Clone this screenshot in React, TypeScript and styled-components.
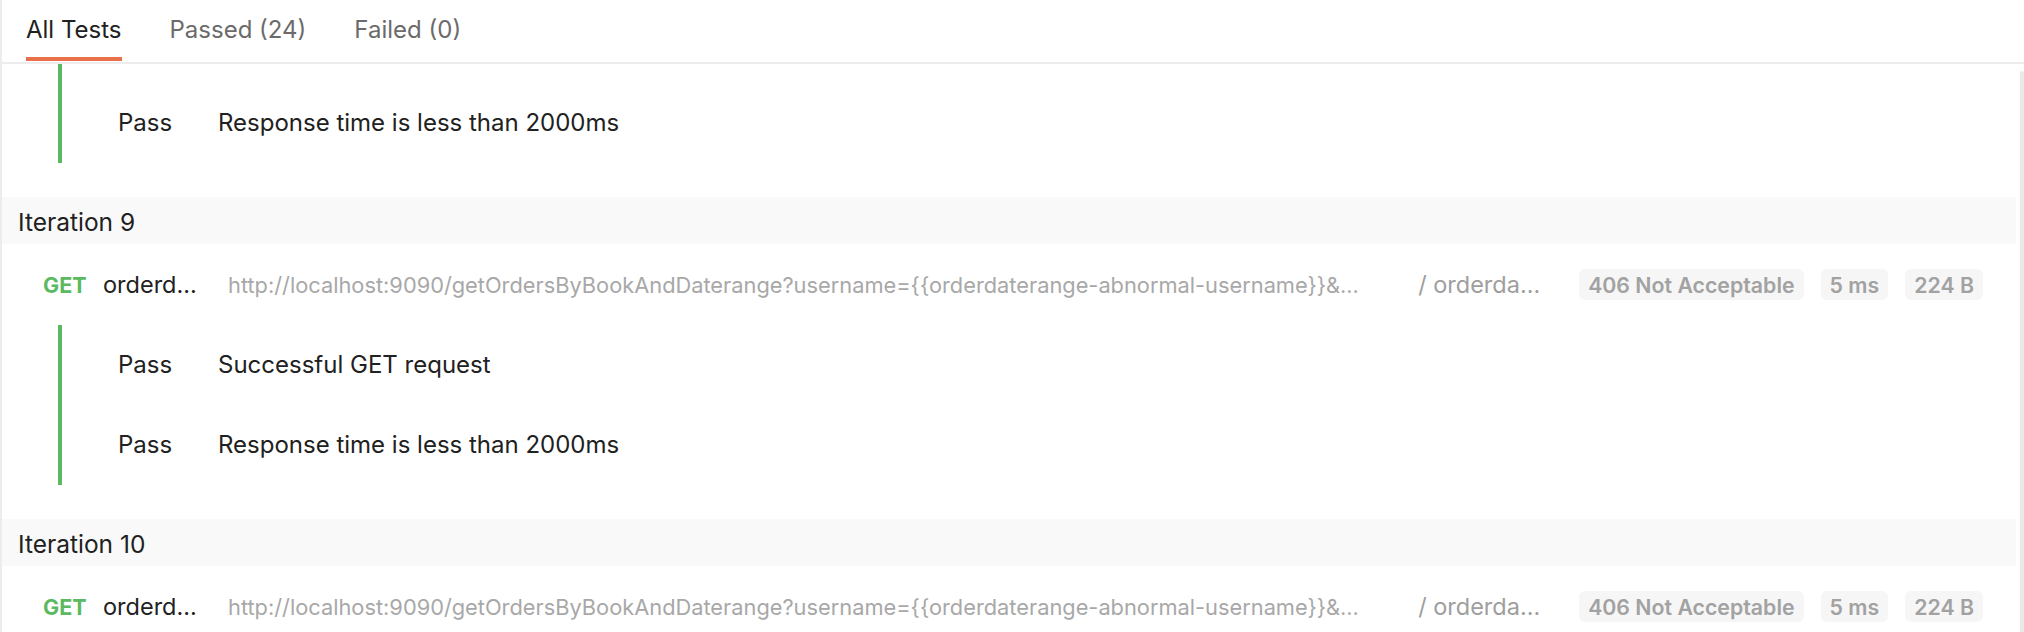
import React from "react";
import styled, { createGlobalStyle } from "styled-components";

const GlobalStyle = createGlobalStyle`
  html, body { margin: 0; padding: 0; background: #ffffff; }
  body { font-family: Inter, "Noto Sans", "Liberation Sans", sans-serif; color: #212121; }
  * { box-sizing: border-box; }
`;

const Frame = styled.div`
  display: flex;
  flex-direction: column;
  height: 632px;
  border-left: 2px solid #ececec;
  overflow: hidden;
`;

const TabBar = styled.div`
  display: flex;
  align-items: flex-start;
  gap: 48px;
  height: 64px;
  padding-left: 24px;
  border-bottom: 2px solid #ededed;
  flex-shrink: 0;
`;

const Tab = styled.div<{ $active?: boolean }>`
  font-size: 24px;
  line-height: 28px;
  padding: 16px 0 13px;
  color: ${(p) => (p.$active ? "#212121" : "#6b6b6b")};
  border-bottom: 4px solid ${(p) => (p.$active ? "#e8704a" : "transparent")};
  white-space: nowrap;
`;

const Body = styled.div`
  display: flex;
  flex: 1;
  min-height: 0;
`;

const Results = styled.div`
  flex: 1;
  min-width: 0;
  display: flex;
  flex-direction: column;
  overflow: hidden;
`;

const ScrollTrack = styled.div`
  width: 8px;
  flex-shrink: 0;
  display: flex;
  flex-direction: column;
  padding: 7px 0 0 4px;
`;

const Thumb = styled.div`
  flex: 1;
  width: 4px;
  background: #e9e9e9;
  border-radius: 3px 3px 0 0;
`;

const TestBlock = styled.div<{ $padTop?: number }>`
  margin: 0 0 34px 56px;
  padding: ${(p) => p.$padTop ?? 0}px 0 0 56px;
  border-left: 4px solid #5bb95f;
  display: flex;
  flex-direction: column;
`;

const TestRow = styled.div`
  display: flex;
  align-items: center;
  height: 80px;
  font-size: 24px;
  line-height: 28px;
  color: #212121;
`;

const Status = styled.span`
  width: 100px;
  flex-shrink: 0;
`;

const TestName = styled.span`
  white-space: nowrap;
`;

const IterationHeader = styled.div`
  background: #f9f9f9;
  padding: 11px 16px 8px;
  font-size: 24.5px;
  line-height: 28px;
  color: #212121;
  flex-shrink: 0;
`;

const RequestRow = styled.div`
  display: flex;
  align-items: center;
  height: 81px;
  padding: 0 33px 0 41px;
  flex-shrink: 0;
  font-size: 23.5px;
  line-height: 28px;
  white-space: nowrap;
`;

const Method = styled.span`
  width: 60px;
  flex-shrink: 0;
  font-size: 21.5px;
  font-weight: 700;
  color: #5bb95f;
`;

const ReqName = styled.span`
  width: 125px;
  flex-shrink: 0;
  color: #212121;
  overflow: hidden;
`;

const Url = styled.span`
  flex: 1;
  min-width: 0;
  margin-right: 40px;
  font-size: 21.8px;
  color: #a8a8a8;
  overflow: hidden;
  text-overflow: ellipsis;
`;

const Folder = styled.span`
  width: 161px;
  flex-shrink: 0;
  color: #9e9e9e;
  overflow: hidden;
`;

const Badges = styled.div`
  display: flex;
  gap: 17px;
  flex-shrink: 0;
`;

const Badge = styled.span`
  height: 31px;
  display: flex;
  align-items: center;
  padding: 0 9px;
  border-radius: 6px;
  background: #f6f6f6;
  color: #a2a2a2;
  font-size: 21.3px;
  font-weight: 600;
`;

const URL_TEXT =
  "http://localhost:9090/getOrdersByBookAndDaterange?username={{orderdaterange-abnormal-username}}&...";

function Request() {
  return (
    <RequestRow>
      <Method>GET</Method>
      <ReqName>orderd...</ReqName>
      <Url>{URL_TEXT}</Url>
      <Folder>/ orderda...</Folder>
      <Badges>
        <Badge>406 Not Acceptable</Badge>
        <Badge>5 ms</Badge>
        <Badge>224 B</Badge>
      </Badges>
    </RequestRow>
  );
}

export default function App() {
  return (
    <>
      <GlobalStyle />
      <Frame>
        <TabBar>
          <Tab $active>All Tests</Tab>
          <Tab>Passed (24)</Tab>
          <Tab>Failed (0)</Tab>
        </TabBar>
        <Body>
          <Results>
            <TestBlock $padTop={19}>
              <TestRow>
                <Status>Pass</Status>
                <TestName>Response time is less than 2000ms</TestName>
              </TestRow>
            </TestBlock>
            <IterationHeader>Iteration 9</IterationHeader>
            <Request />
            <TestBlock>
              <TestRow>
                <Status>Pass</Status>
                <TestName>Successful GET request</TestName>
              </TestRow>
              <TestRow>
                <Status>Pass</Status>
                <TestName>Response time is less than 2000ms</TestName>
              </TestRow>
            </TestBlock>
            <IterationHeader>Iteration 10</IterationHeader>
            <Request />
          </Results>
          <ScrollTrack>
            <Thumb />
          </ScrollTrack>
        </Body>
      </Frame>
    </>
  );
}
